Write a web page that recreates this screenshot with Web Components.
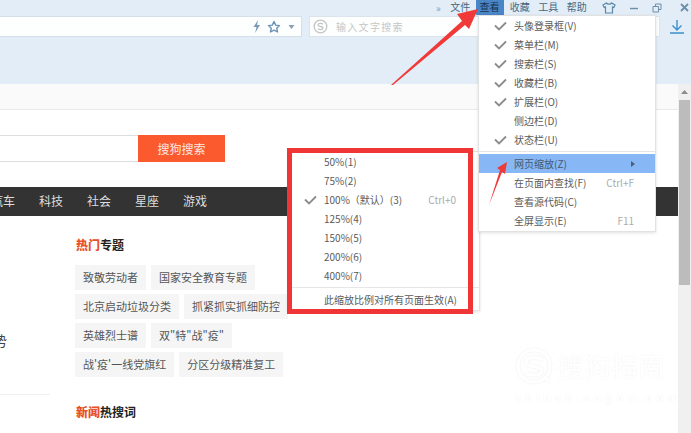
<!DOCTYPE html>
<html lang="zh">
<head>
<meta charset="utf-8">
<title>搜狗浏览器 网页缩放</title>
<style>
html,body{margin:0;height:100%;overflow:hidden;background:#fff}
body{font:10px "Noto Sans CJK SC","Liberation Sans",sans-serif}
</style>
</head>
<body>
<browser-window>
    <browser-chrome></browser-chrome>
    <page-view>
        <tab-strip></tab-strip>
        <search-row></search-row>
        <nav-bar>
            <span>汽车</span><span>科技</span><span>社会</span><span>星座</span><span>游戏</span>
        </nav-bar>
        <page-main>
            <section-title hot="热门" rest="专题"></section-title>
            <chip-row><tag-chip>致敬劳动者</tag-chip><tag-chip>国家安全教育专题</tag-chip></chip-row>
            <chip-row><tag-chip>北京启动垃圾分类</tag-chip><tag-chip>抓紧抓实抓细防控</tag-chip></chip-row>
            <chip-row><tag-chip>英雄烈士谱</tag-chip><tag-chip>双"特"战"疫"</tag-chip></chip-row>
            <chip-row><tag-chip>战'疫'一线党旗红</tag-chip><tag-chip>分区分级精准复工</tag-chip></chip-row>
            <section-title hot="新闻" rest="热搜词" style="margin-top:27px"></section-title>
        </page-main>
    </page-view>
    <scroll-bar></scroll-bar>

    <water-mark></water-mark>

    <pop-menu style="left:288px;top:151px;width:190px;--short-gap:23px">
        <menu-item>50%(1)</menu-item>
        <menu-item>75%(2)</menu-item>
        <menu-item checked shortcut="Ctrl+0">100%（默认）(3)</menu-item>
        <menu-item>125%(4)</menu-item>
        <menu-item>150%(5)</menu-item>
        <menu-item>200%(6)</menu-item>
        <menu-item>400%(7)</menu-item>
        <menu-sep></menu-sep>
        <menu-item>此缩放比例对所有页面生效(A)</menu-item>
    </pop-menu>
    <pop-menu style="left:478px;top:15px;width:176px">
        <menu-item checked>头像登录框(V)</menu-item>
        <menu-item checked>菜单栏(M)</menu-item>
        <menu-item checked>搜索栏(S)</menu-item>
        <menu-item checked>收藏栏(B)</menu-item>
        <menu-item checked>扩展栏(O)</menu-item>
        <menu-item>侧边栏(D)</menu-item>
        <menu-item checked>状态栏(U)</menu-item>
        <menu-sep></menu-sep>
        <menu-item active arrow>网页缩放(Z)</menu-item>
        <menu-item shortcut="Ctrl+F">在页面内查找(F)</menu-item>
        <menu-item>查看源代码(C)</menu-item>
        <menu-item shortcut="F11">全屏显示(E)</menu-item>
    </pop-menu>

    <red-marks></red-marks>
</browser-window>

<script>
// **************************************************************************** helper
// attach an open shadow root with the given html
const shadow = (el, html) => {
    (el.shadowRoot || el.attachShadow({ mode: 'open' })).innerHTML = html;
};

// **************************************************************************** <browser-window>
customElements.define('browser-window', class extends HTMLElement {
    connectedCallback() {
        shadow(this, `<style>
            :host{display:grid;grid-template-columns:678px 13px;grid-template-rows:84px 349px;
                  width:691px;height:433px;position:relative;overflow:hidden;filter:blur(.45px)}
            ::slotted(browser-chrome){grid-column:1 / 3}
        </style><slot></slot>`);
    }
});

// **************************************************************************** <browser-chrome>
customElements.define('browser-chrome', class extends HTMLElement {
    connectedCallback() {
        shadow(this, `<style>
            :host{display:flex;flex-direction:column;background:#e3edf7;color:#47687f;overflow:hidden}
            .title{height:15px;display:flex;align-items:center;padding-left:436px;margin-bottom:1px}
            .more{width:13px;color:#7f9db5;font-size:10px;letter-spacing:-1px}
            .m{width:28.5px;height:15px;line-height:14px;text-align:center;font-size:10px}
            .m.on{background:#4a85c6;color:#17324d}
            .ico{display:flex;justify-content:center;align-items:center;height:15px}
            .bar{height:21px;display:flex;align-items:stretch}
            .addr{width:302px;flex:none;background:#fdfefe;border:solid #d5dfe9;border-width:1px 1px 1px 0;
                  display:flex;align-items:center;justify-content:flex-end;box-sizing:border-box}
            .find{width:351px;margin-left:7px;flex:none;background:#fdfefe;border:1px solid #dbe4ed;box-sizing:border-box;
                  display:flex;align-items:center;padding-left:3px;color:#c6c6c6;font-size:10px}
            .find span{margin-left:8px;letter-spacing:1.3px}
            .dl{margin-left:10px;display:flex;align-items:center}
        </style>
        <div class="title">
            <span class="more">»</span>
            <span class="m" style="margin-left:-3px">文件</span><span class="m on" style="width:28px;margin-left:1px">查看</span>
            <span class="m" style="margin-left:2px">收藏</span><span class="m">工具</span><span class="m">帮助</span>
            <span class="ico" style="width:16px;margin-left:10px">
                <svg width="14" height="12" viewBox="0 0 14 12" fill="none" stroke="#5c88a8" stroke-width="1.2"><path d="M4.5 1 1 3l1.2 2.5 1.3-.6V11h7V4.9l1.3.6L13 3 9.5 1C9 2.6 5 2.6 4.5 1z"/></svg>
            </span>
            <span class="ico" style="width:12px;margin-left:11px">
                <svg width="10" height="4" viewBox="0 0 10 4"><path d="M1 2.5h8" stroke="#6d8ea8" stroke-width="1.4"/></svg>
            </span>
            <span class="ico" style="width:12px;margin-left:11px">
                <svg width="10" height="10" viewBox="0 0 10 10" fill="none" stroke="#6d8ea8"><path d="M1 3.5h5.5v5.5H1zM3.5 3.5v-2.500h5.500v5.500H6.500"/></svg>
            </span>
            <span class="ico" style="width:12px;margin-left:15px">
                <svg width="9" height="9" viewBox="0 0 9 9"><path d="M1 1l7 7M8 1L1 8" stroke="#6d8ea8" stroke-width="1.800"/></svg>
            </span>
        </div>
        <div class="bar">
            <div class="addr">
                <svg width="9" height="15" viewBox="0 0 9 15" style="margin-right:6px"><path d="M6 1 1.500 8h3L3 14 8 6H5z" fill="#7d9ab3"/></svg>
                <svg width="14" height="14" viewBox="0 0 14 14" style="margin-right:7px"><path d="M7 1.500l1.700 3.600 3.800.5-2.800 2.600.8 3.800L7 10.100l-3.500 1.900.8-3.800L1.500 5.600l3.800-.5z" fill="none" stroke="#6c93b5" stroke-width="1.400" stroke-linejoin="round"/></svg>
                <svg width="7" height="4" viewBox="0 0 7 4" style="margin-right:6px"><path d="M.5 0h6L3.500 4z" fill="#8a9fb0"/></svg>
            </div>
            <div class="find">
                <svg width="15" height="15" viewBox="0 0 15 15" fill="none" stroke="#c4c4c4" stroke-width="1.300"><circle cx="7.500" cy="7.500" r="6.300"/><path d="M10 5.200C8.500 4 5 4.200 5 6c0 2 5 1 5 3 0 1.800-3.500 2-5 .8"/></svg>
                <span>输入文字搜索</span>
            </div>
            <div class="dl">
                <svg width="14" height="15" viewBox="0 0 14 15" fill="none" stroke="#3b8fce" stroke-width="1.400"><path d="M7 1v10M2.500 6.500 7 11l4.500-4.500M0 14h14"/></svg>
            </div>
        </div>`);
    }
});

// **************************************************************************** <page-view>
customElements.define('page-view', class extends HTMLElement {
    connectedCallback() {
        shadow(this, `<style>
            :host{display:flex;flex-direction:column;background:#fff;overflow:hidden;min-width:0}
        </style><slot></slot>`);
    }
});

// **************************************************************************** <tab-strip>
customElements.define('tab-strip', class extends HTMLElement {
    connectedCallback() {
        shadow(this, `<style>
            :host{display:block;height:25px;flex:none;background:#fafafa;border-bottom:1px solid #e9e9e9}
        </style>`);
    }
});

// **************************************************************************** <search-row>
customElements.define('search-row', class extends HTMLElement {
    connectedCallback() {
        shadow(this, `<style>
            :host{display:flex;flex:none;height:27px;margin-top:25px}
            .in{width:138px;box-sizing:border-box;border:solid #dedede;border-width:1px 0}
            .btn{width:87px;background:#fb5a2e;color:#fde9e2;font-size:12px;line-height:27px;text-align:center}
        </style><div class="in"></div><div class="btn">搜狗搜索</div>`);
    }
});

// **************************************************************************** <nav-bar>
customElements.define('nav-bar', class extends HTMLElement {
    connectedCallback() {
        shadow(this, `<style>
            :host{display:flex;flex:none;gap:24px;height:29px;margin-top:25px;padding-left:0;
                  background:#333;color:#ddd;font-size:12px;line-height:27px;overflow:hidden}
            ::slotted(span:first-child){margin-left:-9px}
        </style><slot></slot>`);
    }
});

// **************************************************************************** <page-main>
// left column holds only the cut off word and its rule
customElements.define('page-main', class extends HTMLElement {
    connectedCallback() {
        shadow(this, `<style>
            :host{display:flex;flex:1;min-height:0;color:#555}
            .left{width:50px;flex:none;margin-right:25px;display:flex;flex-direction:column;height:179px}
            .cut{width:7px;height:18px;margin-top:115px;overflow:hidden;display:flex;justify-content:flex-end;
                 font-size:14px;line-height:18px;color:#444}
            .cut span{flex:none}
            .rule{margin-top:auto;height:1px;background:#efefef}
            .right{flex:1;min-width:0;padding-top:21px}
        </style>
        <div class="left"><div class="cut"><span>势</span></div><div class="rule"></div></div>
        <div class="right"><slot></slot></div>`);
    }
});

// **************************************************************************** <section-title>
customElements.define('section-title', class extends HTMLElement {
    connectedCallback() {
        shadow(this, `<style>
            :host{display:block;height:18px;margin-bottom:10px;margin-left:1px;font-size:12px;line-height:16px;font-weight:700;color:#222}
            b{color:#e8502a}
        </style><b>${this.getAttribute('hot')}</b>${this.getAttribute('rest')}`);
    }
});

// **************************************************************************** <chip-row>
customElements.define('chip-row', class extends HTMLElement {
    connectedCallback() {
        shadow(this, `<style>
            :host{display:flex;gap:5px;margin-bottom:4px;white-space:nowrap}
        </style><slot></slot>`);
    }
});

// **************************************************************************** <tag-chip>
customElements.define('tag-chip', class extends HTMLElement {
    connectedCallback() {
        shadow(this, `<style>
            :host{display:block;height:25px;padding:0 8px;background:#f5f5f5;color:#555;font-size:11px;line-height:25px}
        </style><slot></slot>`);
    }
});

// **************************************************************************** <scroll-bar>
customElements.define('scroll-bar', class extends HTMLElement {
    connectedCallback() {
        shadow(this, `<style>
            :host{display:flex;flex-direction:column;align-items:center;background:#f0f0f0}
            .up{height:16px;display:flex;align-items:center;justify-content:center}
            .thumb{width:11px;height:185px;background:#bcbcbc}
        </style>
        <div class="up"><svg width="7" height="4" viewBox="0 0 7 4"><path d="M3.500 0l3.500 4H0z" fill="#8c8c8c"/></svg></div>
        <div class="thumb"></div>`);
    }
});

// **************************************************************************** <water-mark>
customElements.define('water-mark', class extends HTMLElement {
    connectedCallback() {
        shadow(this, `<style>
            :host{position:absolute;left:515px;top:345px;width:156px;color:#fff;
                  text-shadow:0 0 2px rgba(0,0,0,.07);pointer-events:none}
            .top{display:flex;align-items:center;gap:4px;height:42px}
            .cn{font-size:27px;line-height:40px;white-space:nowrap}
            .en{margin-top:3px;font:700 13px/16px "Liberation Sans",sans-serif;letter-spacing:3.300px;white-space:nowrap}
            svg{flex:none;filter:drop-shadow(0 0 1px rgba(0,0,0,.07))}
        </style>
        <div class="top">
            <svg width="38" height="38" viewBox="0 0 38 38" fill="none" stroke="#fff" stroke-width="3"><circle cx="19" cy="19" r="16"/><path d="M27 13C23 9 11 10 11 15c0 6 16 3 16 9 0 5-12 5-16 2"/><path d="M30 30l4 5"/></svg>
            <div class="cn">搜狗指南</div>
        </div>
        <div class="en">zhinan.sogou.com</div>`);
    }
});

// **************************************************************************** <pop-menu>
customElements.define('pop-menu', class extends HTMLElement {
    connectedCallback() {
        shadow(this, `<style>
            :host{position:absolute;display:block;background:#fff;border:1px solid #e2e2e2;padding-bottom:1px;
                  box-shadow:0 1px 3px rgba(0,0,0,.12)}
        </style><slot></slot>`);
    }
});

// **************************************************************************** <menu-sep>
customElements.define('menu-sep', class extends HTMLElement {
    connectedCallback() {
        shadow(this, `<style>
            :host{display:flex;align-items:center;height:5px}
            i{flex:1;height:1px;background:#e6e6e6}
        </style><i></i>`);
    }
});

// **************************************************************************** <menu-item>
customElements.define('menu-item', class extends HTMLElement {
    connectedCallback() {
        const checked = this.hasAttribute('checked');
        const short = this.getAttribute('shortcut');
        shadow(this, `<style>
            :host{display:flex;align-items:center;height:19px;color:#5a5a5a;font-size:10px;white-space:nowrap}
            :host([active]){background:#87b7f5;color:#44586e}
            .chk{width:35px;flex:none;display:flex;justify-content:flex-start;padding-left:15px;box-sizing:border-box}
            .lbl{flex:1}
            .short{color:#ababab;margin-right:var(--short-gap,21px)}
            .arr{margin-right:20px;display:flex}
        </style>
        <span class="chk">${checked ? '<svg width="13" height="10" viewBox="0 0 13 10" fill="none" stroke="#8c8c8c" stroke-width="1.800"><path d="M1 4.500l4 4 7-7"/></svg>' : ''}</span>
        <span class="lbl"><slot></slot></span>
        ${short ? `<span class="short">${short}</span>` : ''}
        ${this.hasAttribute('arrow') ? '<span class="arr"><svg width="4" height="6" viewBox="0 0 4 6"><path d="M0 0l4 3-4 3z" fill="#4b5f78"/></svg></span>' : ''}`);
    }
});

// **************************************************************************** <red-marks>
// annotations drawn over the screenshot: frame and two arrows
customElements.define('red-marks', class extends HTMLElement {
    connectedCallback() {
        shadow(this, `<style>
            :host{position:absolute;inset:0;display:block;pointer-events:none}
            .frame{position:absolute;left:287px;top:148px;width:186px;height:166px;box-sizing:border-box;border:5px solid #ef3535}
            svg{position:absolute;left:0;top:0}
        </style>
        <div class="frame"></div>
        <svg width="691" height="433" viewBox="0 0 691 433" fill="#f03a3a">
            <path d="M391 85 462 21 457 14 478 9 469 29 465 25 393 85z"/>
            <path d="M489 205 500 170 497 168 507 162 505 174 502 172z"/>
        </svg>`);
    }
});
</script>
</body>
</html>
